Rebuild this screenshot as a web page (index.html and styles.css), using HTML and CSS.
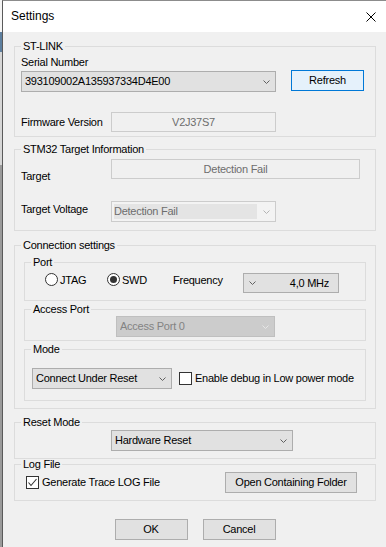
FILE: index.html
```html
<!DOCTYPE html>
<html>
<head>
<meta charset="utf-8">
<title>Settings</title>
<link rel="stylesheet" href="styles.css">
</head>
<body>
<div class="window">
  <div class="titlebar">
    <span class="title">Settings</span>
    <svg class="close" width="10" height="10" viewBox="0 0 10 10"><path d="M0.5 0.5 L9.5 9.5 M9.5 0.5 L0.5 9.5" stroke="#000" stroke-width="1" fill="none"/></svg>
  </div>
  <div class="client">
    <fieldset class="group g-stlink">
      <legend>ST-LINK</legend>
      <div class="stlink-body">
        <div class="lbl">Serial Number</div>
        <div class="serial-row">
          <div class="combo combo-serial"><span class="val">393109002A135937334D4E00</span><svg class="chev" width="7" height="4" viewBox="0 0 7 4"><polyline points="0.5,0.5 3.5,3.5 6.5,0.5" fill="none" stroke="#606060"/></svg></div>
          <button class="btn btn-default btn-refresh">Refresh</button>
        </div>
        <div class="fw-row">
          <span class="fw-label">Firmware Version</span>
          <div class="textbox fw-box">V2J37S7</div>
        </div>
      </div>
    </fieldset>

    <fieldset class="group g-stm">
      <legend>STM32 Target Information</legend>
      <div class="target-grid">
        <span class="tlabel tlabel-1">Target</span>
        <div class="textbox target-box">Detection Fail</div>
        <span class="tlabel tlabel-2">Target Voltage</span>
        <div class="combo combo-dis combo-volt"><span class="val">Detection Fail</span><svg class="chev" width="7" height="4" viewBox="0 0 7 4"><polyline points="0.5,0.5 3.5,3.5 6.5,0.5" fill="none" stroke="#b4b4b4"/></svg></div>
      </div>
    </fieldset>

    <fieldset class="group g-conn">
      <legend>Connection settings</legend>
      <div class="conn-body">
        <fieldset class="group g-port">
          <legend>Port</legend>
          <div class="port-row">
            <div class="radio-item ri-jtag"><span class="radio"></span><span class="rlabel">JTAG</span></div>
            <div class="radio-item ri-swd"><span class="radio on"></span><span class="rlabel">SWD</span></div>
            <span class="freq-label">Frequency</span>
            <div class="combo combo-freq"><svg class="chev" width="7" height="4" viewBox="0 0 7 4"><polyline points="0.5,0.5 3.5,3.5 6.5,0.5" fill="none" stroke="#606060"/></svg><span class="val">4,0 MHz</span></div>
          </div>
        </fieldset>
        <fieldset class="group g-access">
          <legend>Access Port</legend>
          <div class="access-body">
            <div class="combo combo-gray combo-access"><span class="val">Access Port 0</span><svg class="chev" width="7" height="4" viewBox="0 0 7 4"><polyline points="0.5,0.5 3.5,3.5 6.5,0.5" fill="none" stroke="#e6e6e6"/></svg></div>
          </div>
        </fieldset>
        <fieldset class="group g-mode">
          <legend>Mode</legend>
          <div class="mode-body">
            <div class="combo combo-mode"><span class="val">Connect Under Reset</span><svg class="chev" width="7" height="4" viewBox="0 0 7 4"><polyline points="0.5,0.5 3.5,3.5 6.5,0.5" fill="none" stroke="#606060"/></svg></div>
            <span class="checkbox cb-mode"></span>
            <span class="cb-label">Enable debug in Low power mode</span>
          </div>
        </fieldset>
      </div>
    </fieldset>

    <fieldset class="group g-reset">
      <legend>Reset Mode</legend>
      <div class="reset-body">
        <div class="combo combo-reset"><span class="val">Hardware Reset</span><svg class="chev" width="7" height="4" viewBox="0 0 7 4"><polyline points="0.5,0.5 3.5,3.5 6.5,0.5" fill="none" stroke="#606060"/></svg></div>
      </div>
    </fieldset>

    <fieldset class="group g-log">
      <legend>Log File</legend>
      <div class="log-body">
        <span class="checkbox"><svg width="11" height="11" viewBox="0 0 11 11"><polyline points="1.5,5.5 4,8.5 9.5,2" fill="none" stroke="#333" stroke-width="1.1"/></svg></span>
        <span class="cb-label">Generate Trace LOG File</span>
        <button class="btn btn-folder">Open Containing Folder</button>
      </div>
    </fieldset>

    <div class="actions">
      <button class="btn btn-action">OK</button>
      <button class="btn btn-action">Cancel</button>
    </div>
  </div>
</div>
</body>
</html>
```
FILE: styles.css
```css
html, body {
  margin: 0;
  padding: 0;
  height: 100%;
}
body {
  font-family: "Liberation Sans", Arial, sans-serif;
  font-size: 11px;
  line-height: 13px;
  letter-spacing: -0.25px;
  color: #000;
  overflow: hidden;
  background: linear-gradient(to bottom, #f4f4f4 0, #f4f4f4 32px, #5d7f9f 32px, #5d7f9f 52px, #d6d6d6 52px, #d6d6d6 165px, #9a9a9a 165px, #9a9a9a 100%);
}
.window {
  margin-left: 2px;
  height: 547px;
  box-sizing: border-box;
  border-left: 1px solid #5a5a5a;
  border-top: 1px solid #8c8c8c;
  background: #f0f0f0;
}
.titlebar {
  height: 31px;
  background: #fff;
  display: flex;
  align-items: center;
  justify-content: space-between;
  padding: 0 10px 0 8px;
}
.title {
  font-size: 12px;
  letter-spacing: 0;
  line-height: 31px;
}
.close {
  display: block;
}
.client {
  padding: 8px 10px 0 11px;
}

/* group boxes */
fieldset.group {
  margin: 0;
  padding: 0;
  border: 1px solid #dcdcdc;
  min-width: 0;
  box-sizing: border-box;
}
fieldset.group > legend {
  padding: 0 2px;
  margin-left: 6px;
  line-height: 13px;
}
.g-stlink { height: 97px; }
.g-stm { height: 88px; margin-top: 6px !important; }
.g-conn { height: 170px; margin-top: 8px !important; }
.g-reset { height: 43px; margin-top: 7px !important; }
.g-log { height: 43px; margin-top: -1px !important; }
.g-port { height: 45px; }
.g-access { height: 38px; margin-top: 2px !important; }
.g-mode { height: 58px; margin-top: 2px !important; }

/* controls */
.combo {
  display: flex;
  align-items: center;
  box-sizing: border-box;
  height: 21px;
  border: 1px solid #adadad;
  background: #e1e1e1;
  padding: 0 5px 0 3px;
  line-height: 19px;
  white-space: nowrap;
}
.combo .val {
  flex: 1;
  overflow: hidden;
}
.chev {
  display: block;
  flex: none;
}
.btn {
  box-sizing: border-box;
  height: 21px;
  border: 1px solid #adadad;
  background: #e1e1e1;
  font: inherit;
  letter-spacing: inherit;
  line-height: 19px;
  color: #000;
  padding: 0;
  margin: 0;
  text-align: center;
  border-radius: 0;
}
.btn-default {
  border-color: #0078d7;
  background: #e5f1fb;
}
.textbox {
  box-sizing: border-box;
  border: 1px solid #cccccc;
  background: #f0f0f0;
  color: #6d6d6d;
  text-align: center;
  height: 20px;
  line-height: 18px;
}

/* ST-LINK */
.stlink-body {
  padding: 3px 0 0 6px;
}
.serial-row {
  display: flex;
  align-items: flex-start;
  gap: 15px;
  margin-top: 1px;
}
.combo-serial {
  width: 255px;
  margin-top: 1px;
}
.btn-refresh {
  width: 73px;
}
.fw-row {
  display: flex;
  align-items: center;
  margin-top: 20px;
}
.fw-label {
  width: 90px;
}
.fw-box {
  width: 165px;
}

/* STM32 */
.target-grid {
  display: grid;
  grid-template-columns: 90px 249px;
  row-gap: 18px;
  padding: 3px 0 0 6px;
}
.tlabel-1 { padding-top: 11px; }
.tlabel-2 { padding-top: 2px; }
.target-box { width: 249px; }
.combo-dis {
  border-color: #cccccc;
  background: #f3f3f3;
  color: #6d6d6d;
  padding: 2px 5px 2px 2px;
  width: 165px;
}
.combo-dis .val {
  background: #e4e4e4;
  height: 15px;
  line-height: 15px;
  padding-left: 0;
  margin-right: 6px;
}

/* connection */
.conn-body {
  padding: 4px 9px 0 9px;
}
.port-row {
  display: flex;
  align-items: flex-start;
  padding: 4px 0 0 20px;
}
.radio-item {
  display: flex;
  align-items: flex-start;
  gap: 2px;
}
.ri-jtag { width: 62px; }
.ri-swd { width: 66px; }
.radio {
  width: 13px;
  height: 13px;
  box-sizing: border-box;
  border: 1px solid #333;
  border-radius: 50%;
  background: #fff;
  display: flex;
  align-items: center;
  justify-content: center;
}
.radio.on::after {
  content: "";
  width: 7px;
  height: 7px;
  border-radius: 50%;
  background: #333;
}
.rlabel {
  margin-top: 1px;
}
.freq-label {
  width: 70px;
  margin-top: 1px;
}
.combo-freq {
  width: 96px;
  height: 20px;
  line-height: 18px;
  padding: 0 9px 0 5px;
}
.combo-freq .val {
  text-align: right;
}

.access-body {
  padding-left: 91px;
}
.combo-gray {
  width: 159px;
  background: #cccccc;
  border-color: #bfbfbf;
  color: #838383;
}

.mode-body {
  display: flex;
  align-items: center;
  padding: 12px 0 0 7px;
}
.combo-mode {
  width: 140px;
}
.checkbox {
  width: 13px;
  height: 13px;
  box-sizing: border-box;
  border: 1px solid #333;
  background: #fff;
  flex: none;
  display: block;
}
.checkbox svg {
  display: block;
}
.cb-mode {
  margin-left: 7px;
}
.cb-label {
  margin-left: 3px;
}

/* reset */
.reset-body {
  padding: 1px 0 0 96px;
}
.combo-reset {
  width: 182px;
}

/* log */
.log-body {
  display: flex;
  align-items: center;
  padding: 1px 18px 0 11px;
  height: 21px;
}
.btn-folder {
  width: 132px;
  margin-left: auto;
}

.actions {
  display: flex;
  justify-content: center;
  gap: 15px;
  margin-top: 18px;
}
.btn-action {
  width: 73px;
}
```
